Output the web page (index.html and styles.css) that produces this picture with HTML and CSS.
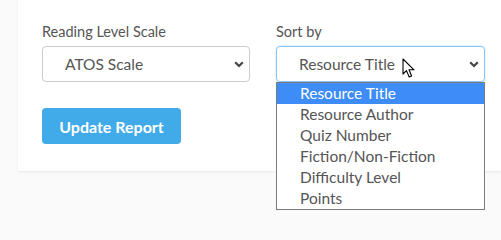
FILE: index.html
```html
<!DOCTYPE html>
<html>
<head>
<meta charset="utf-8">
<link rel="stylesheet" href="styles.css">
</head>
<body>
<div class="card">
  <div class="fields">
    <div class="field">
      <div class="label">Reading Level Scale</div>
      <div class="select">
        <span class="select-text">ATOS Scale</span>
        <svg class="chev" width="10" height="7" viewBox="0 0 10 7"><path d="M1.2 1.3 L5 5 L8.8 1.3" fill="none" stroke="#444" stroke-width="2.2"/></svg>
      </div>
    </div>
    <div class="field">
      <div class="label">Sort by</div>
      <div class="select focused">
        <span class="select-text">Resource Title</span>
        <svg class="chev" width="10" height="7" viewBox="0 0 10 7"><path d="M1.2 1.3 L5 5 L8.8 1.3" fill="none" stroke="#444" stroke-width="2.2"/></svg>
        <svg class="cursor" width="14" height="21" viewBox="0 0 14 21"><path d="M1 1 L1 16 L4.5 12.6 L7.2 19 L9.6 18 L7 11.8 L12 11.8 Z" fill="#fff" stroke="#000" stroke-width="1.1" stroke-linejoin="round"/></svg>
        <div class="list">
          <div class="opt active">Resource Title</div>
          <div class="opt">Resource Author</div>
          <div class="opt">Quiz Number</div>
          <div class="opt">Fiction/Non-Fiction</div>
          <div class="opt">Difficulty Level</div>
          <div class="opt">Points</div>
        </div>
      </div>
    </div>
  </div>
  <button class="btn">Update Report</button>
</div>
</body>
</html>
```
FILE: styles.css
```css
html, body {
  margin: 0;
  padding: 0;
}
body {
  background: #fafafa;
  font-family: Lato, "Liberation Sans", sans-serif;
  color: #555;
  height: 216px;
  overflow: hidden;
}
.card {
  margin-left: 18px;
  height: 171px;
  box-sizing: border-box;
  background: #fff;
  box-shadow: 0 1px 2px rgba(0,0,0,0.08);
  padding: 22px 0 0 24px;
}
.fields {
  display: flex;
  gap: 26px;
}
.field {
  width: 208px;
  display: flex;
  flex-direction: column;
}
.label {
  font-size: 14.5px;
  line-height: 20px;
  height: 24px;
  color: #555;
}
.select {
  position: relative;
  height: 36px;
  box-sizing: border-box;
  border: 1px solid #ccc;
  border-radius: 4px;
  display: flex;
  align-items: center;
  padding: 0 5px 0 22px;
  font-size: 15.5px;
  color: #555;
}
.select.focused {
  width: 209px;
  border-color: #8cc4f5;
  box-shadow: 0 0 2px rgba(102,175,233,0.5);
}
.select-text {
  flex: 1;
}
.chev {
  display: block;
}
.cursor {
  position: absolute;
  left: 125px;
  top: 11px;
}
.list {
  position: absolute;
  left: -1px;
  top: 35px;
  width: 209px;
  box-sizing: border-box;
  border: 1px solid #7a7a7a;
  background: #fff;
  z-index: 2;
}
.opt {
  height: 21px;
  line-height: 21px;
  padding-left: 23px;
  font-size: 15.5px;
  color: #555;
}
.opt.active {
  background: #3d8cf8;
  color: #fff;
}
.btn {
  margin-top: 26px;
  width: 139px;
  height: 36px;
  border: none;
  border-radius: 4px;
  background: #41aae9;
  color: #fff;
  font-family: Lato, "Liberation Sans", sans-serif;
  font-weight: bold;
  font-size: 16px;
  padding: 0;
}
```
